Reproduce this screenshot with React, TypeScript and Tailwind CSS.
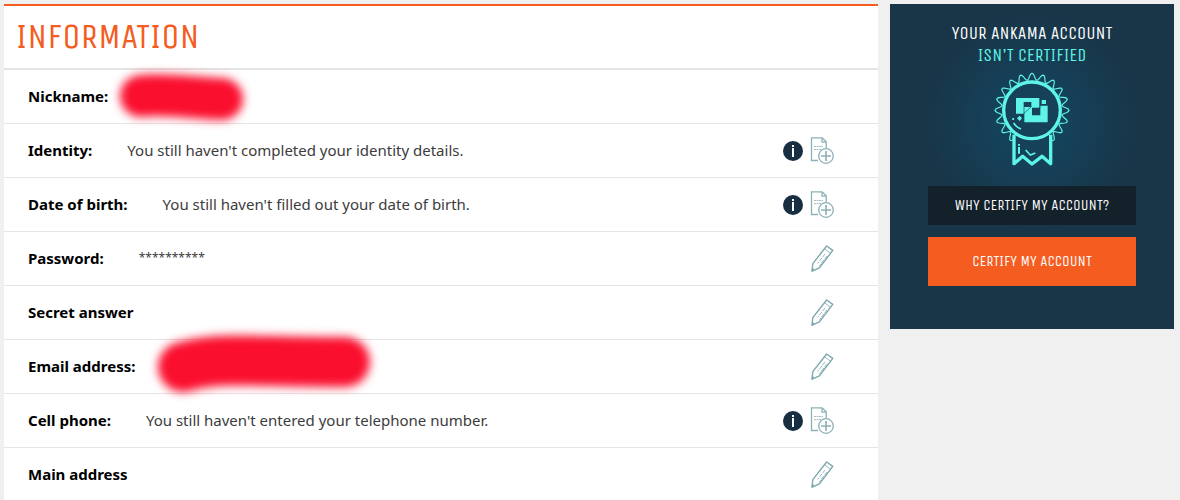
import React from "react";

interface IRow {
  label: string;
  value?: string;
  action: "add" | "edit";
  mask?: "short" | "long";
}

const rows: IRow[] = [
  { label: "Nickname:", action: "edit", mask: "short" },
  { label: "Identity:", value: "You still haven't completed your identity details.", action: "add" },
  { label: "Date of birth:", value: "You still haven't filled out your date of birth.", action: "add" },
  { label: "Password:", value: "**********", action: "edit" },
  { label: "Secret answer", action: "edit" },
  { label: "Email address:", action: "edit", mask: "long" },
  { label: "Cell phone:", value: "You still haven't entered your telephone number.", action: "add" },
  { label: "Main address", action: "edit" },
];

const InfoIcon = () => (
  <svg width="20" height="20" viewBox="0 0 20 20">
    <circle cx="10" cy="10" r="10" fill="#182f42" />
    <path d="M9 4h2v2H9zM9 7h2v9H9z" fill="#fff" />
  </svg>
);

const AddIcon = () => (
  <svg width="24" height="28" viewBox="0 0 24 28" fill="none" stroke="#8db0b6">
    <path d="M8 23.5H1.5V.8h10.7l4 4V11M12 1v4.2h4" strokeWidth="1.3" />
    <path d="M4 9.5h9M4 12.5h7" strokeDasharray="2 .5" strokeWidth=".8" />
    <circle cx="16" cy="19" r="7.3" fill="#fff" strokeWidth="1.3" />
    <path d="M16 14v10M11 19h10" strokeWidth="1.6" />
  </svg>
);

const PencilIcon = () => (
  <svg width="24" height="28" viewBox="0 0 24 28" fill="none" stroke="#7fa8b0" strokeLinejoin="round">
    <path d="M16.6 1 22.8 5.4 9.4 22.8 2 26.2 2.8 18.6z" strokeWidth="1.4" />
    <path d="M14.4 3.8 20.6 8.2" strokeWidth=".8" />
    <path d="M15 9 7.5 18.5M17 11 9.5 20.5" strokeWidth=".8" strokeDasharray="4 1" />
    <path d="M2.6 23.5 4.3 25 2 26.2z" fill="#7fa8b0" />
  </svg>
);

const Mask = ({ size }: { size: "short" | "long" }) =>
  size === "short" ? (
    <svg className="absolute left-[100px] -top-2 z-10 pointer-events-none overflow-visible blur-[5px]" width="164" height="68" fill="none">
      <path d="M37 34C62 31 88 36 118 37" stroke="#fa0f2e" strokeWidth="42" strokeLinecap="round" />
    </svg>
  ) : (
    <svg className="absolute left-[136px] -top-4 z-10 pointer-events-none overflow-visible blur-[5px]" width="250" height="84" fill="none">
      <path d="M43 43C80 32 110 38 205 38" stroke="#fa0f2e" strokeWidth="50" strokeLinecap="round" />
    </svg>
  );

// wavy outline around the medal
const wave = Array.from({ length: 241 }, (_, i) => {
  const a = (i / 240) * Math.PI * 2;
  const r = 101 + 10 * Math.cos(a * 20);
  return `${(155 + r * Math.sin(a)).toFixed(1)},${(135 - r * Math.cos(a)).toFixed(1)}`;
}).join(" ");

const Badge = () => (
  <svg width="78" height="94" viewBox="38 20 234 282" fill="none" stroke="#5ff5e6">
    <polygon points={wave} strokeWidth="3.5" />
    <path d="M101 208V295L127 273 155 296 185 273 211 295V208" fill="#154159" strokeWidth="10" strokeLinejoin="round" />
    <circle cx="155" cy="135" r="85" fill="#154159" strokeWidth="10" />
    <g fill="#5ff5e6" stroke="none">
      <path d="M107 98H177V127H153V110H130V145H107z" />
      <path d="M132 125H155V150H180V121H202V171H132z" />
      <path d="M184 104h13v12h-13z" />
      <path d="M118 151l7 8-7 8-8-8zM96 158h5v6h-5zM113 236h6v5h-6zM113 245h6v20h-6z" />
    </g>
    <path d="M130 145 153 124M157 148 181 124" stroke="#154159" strokeWidth="2" />
    <path d="M100 173Q107 185 122 191M136 254 150 269 165 263" strokeWidth="5" />
  </svg>
);

const App = () => {
  return (
    <div className="min-h-screen flex items-start gap-3 bg-[#f0f0f0] pt-1 pl-1 pr-1.5 font-['Segoe_UI','Noto_Sans',sans-serif]">
      <main className="flex-1 min-w-0 bg-white border-t-2 border-[#f55c20]">
        <header className="h-16 px-3 flex items-center border-b-2 border-[#e4e5e6]">
          <h1 className="text-4xl leading-9 text-[#f55c20] font-['Unica_One','Roboto_Condensed','Liberation_Sans_Narrow',sans-serif]">
            INFORMATION
          </h1>
        </header>
        <dl>
          {rows.map((row) => (
            <div key={row.label} className="relative h-[54px] pl-6 pr-11 flex items-center border-b border-[#e4e5e6]">
              <dt className="pb-0.5 text-[15px] leading-5 font-bold text-black">{row.label}</dt>
              <dd className={`flex-1 ml-[35px] pb-0.5 leading-5 text-[#3c3c3c] ${row.label === "Password:" ? "text-xs" : "text-[15px]"}`}>
                {row.value}
                {row.mask && <Mask size={row.mask} />}
              </dd>
              {row.mask !== "short" && (
                <dd className="flex items-center gap-[7px]">
                  {row.action === "add" && (
                    <button aria-label="More information">
                      <InfoIcon />
                    </button>
                  )}
                  <button aria-label={row.action === "add" ? "Add" : "Edit"}>
                    {row.action === "add" ? <AddIcon /> : <PencilIcon />}
                  </button>
                </dd>
              )}
            </div>
          ))}
        </dl>
      </main>
      <aside className="w-[284px] shrink-0 px-[38px] pt-[18px] pb-[43px] flex flex-col items-center text-center text-white bg-[#193548] bg-[radial-gradient(circle_at_50%_36%,#124862_0,#193548_110px)] font-['Unica_One','Roboto_Condensed','Liberation_Sans_Narrow',sans-serif]">
        <h2 className="text-lg leading-[22px] whitespace-nowrap">
          YOUR ANKAMA ACCOUNT
          <span className="block text-[#5ff5e6]">ISN'T CERTIFIED</span>
        </h2>
        <div className="mt-1.5 mb-5">
          <Badge />
        </div>
        <button className="w-full h-[39px] bg-[#12212a] text-[15px]">WHY CERTIFY MY ACCOUNT?</button>
        <button className="w-full h-[49px] mt-3 bg-[#f55c20] text-[15px]">CERTIFY MY ACCOUNT</button>
      </aside>
    </div>
  );
};

export default App;
